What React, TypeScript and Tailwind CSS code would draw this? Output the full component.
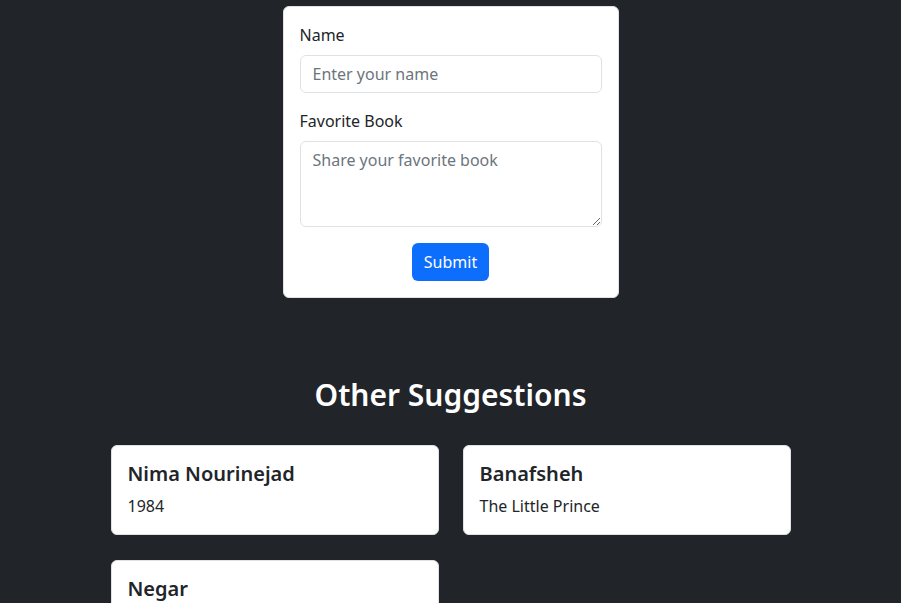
const suggestions = [
  { name: 'Nima Nourinejad', book: '1984' },
  { name: 'Banafsheh', book: 'The Little Prince' },
  { name: 'Negar', book: 'The Alchemist' },
];

export default function App() {
  return (
    <div
      className="min-h-screen bg-[#212529] text-[#212529] pt-[6px] pb-10"
      style={{ fontFamily: '"Noto Sans", "Open Sans", sans-serif' }}
    >
      {/* Form */}
      <div className="mx-auto w-[336px] rounded-[6px] border border-[#dee2e6] bg-white p-4">
        <label className="mb-2 block text-base leading-6">Name</label>
        <input
          className="mb-4 block h-[38px] w-full rounded-[6px] border border-[#dee2e6] px-3 text-base outline-none placeholder:text-[#6c757d]"
          placeholder="Enter your name"
        />
        <label className="mb-2 block text-base leading-6">Favorite Book</label>
        <textarea
          className="mb-4 block h-[86px] w-full rounded-[6px] border border-[#dee2e6] px-3 py-[6px] text-base leading-6 outline-none placeholder:text-[#6c757d]"
          placeholder="Share your favorite book"
        />
        <div className="flex justify-center">
          <button className="h-[38px] rounded-[6px] bg-[#0d6efd] px-3 text-base text-white">
            Submit
          </button>
        </div>
      </div>

      {/* Suggestions */}
      <h2 className="mt-[78px] mb-[31px] text-center text-[30px] leading-[38px] font-semibold text-white">
        Other Suggestions
      </h2>
      <div className="mx-auto grid w-[680px] grid-cols-2 gap-x-6 gap-y-[25px]">
        {suggestions.map((s) => (
          <div key={s.name} className="rounded-[6px] border border-[#dee2e6] bg-white p-4">
            <h5 className="mb-2 text-xl leading-6 font-semibold">{s.name}</h5>
            <p className="text-base leading-6">{s.book}</p>
          </div>
        ))}
      </div>
    </div>
  );
}
